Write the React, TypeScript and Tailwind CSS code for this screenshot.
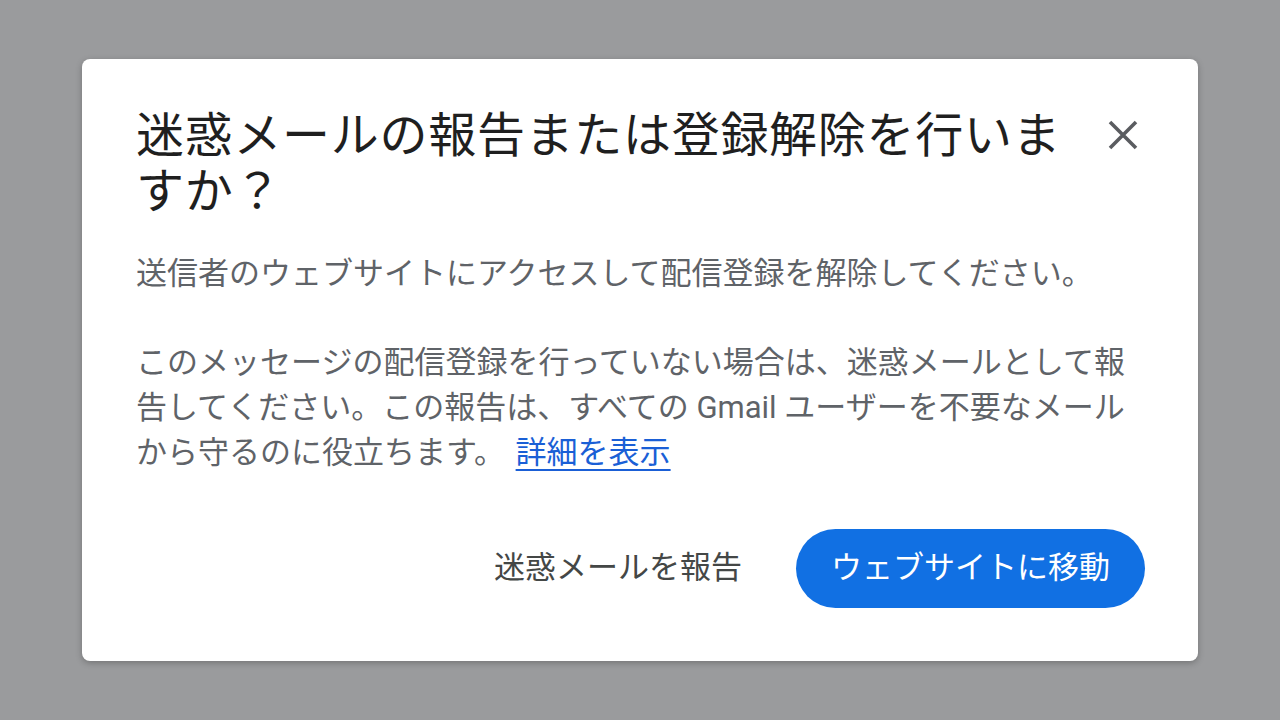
import React from "react";

export default function App() {
  const font = {
    fontFamily: 'Roboto, "Noto Sans CJK JP", "Noto Sans", sans-serif',
  };
  return (
    <div
      className="w-[1280px] h-[720px] bg-[#9a9b9d] flex items-center justify-center"
      style={font}
    >
      <div className="w-[1116px] h-[602px] bg-white rounded-[8px] shadow-[0_2px_6px_rgba(0,0,0,0.25)] flex flex-col pl-[54px] pr-[53px] pt-[49px] pb-[53px]">
        <div className="flex items-start justify-between">
          <h1 className="w-[950px] text-[48px] leading-[56px] tracking-[0.7px] text-[#1f1f1f] font-normal">
            迷惑メールの報告または登録解除を行いますか？
          </h1>
          <button className="mt-[11px] mr-[6px] w-[32px] h-[32px] flex items-center justify-center">
            <svg width="32" height="32" viewBox="0 0 32 32">
              <path
                d="M3 3 L29 29 M29 3 L3 29"
                stroke="#5a5c60"
                strokeWidth="3.6"
                strokeLinecap="butt"
              />
            </svg>
          </button>
        </div>
        <div className="mt-[31px] text-[31px] leading-[45px] text-[#5f6368] w-[1009px]">
          <p>送信者のウェブサイトにアクセスして配信登録を解除してください。</p>
          <p className="mt-[44px]">
            このメッセージの配信登録を行っていない場合は、迷惑メールとして報告してください。この報告は、すべての Gmail ユーザーを不要なメールから守るのに役立ちます。{" "}
            <a className="text-[#1a5fd6] underline underline-offset-[6px] decoration-[2px] ml-[3px]">
              詳細を表示
            </a>
          </p>
        </div>
        <div className="mt-auto flex items-center justify-end gap-[8px]">
          <button className="h-[79px] px-[46px] text-[31px] text-[#444746] rounded-full">
            迷惑メールを報告
          </button>
          <button className="h-[79px] w-[349px] text-[31px] text-white bg-[#1170e3] rounded-full">
            ウェブサイトに移動
          </button>
        </div>
      </div>
    </div>
  );
}
